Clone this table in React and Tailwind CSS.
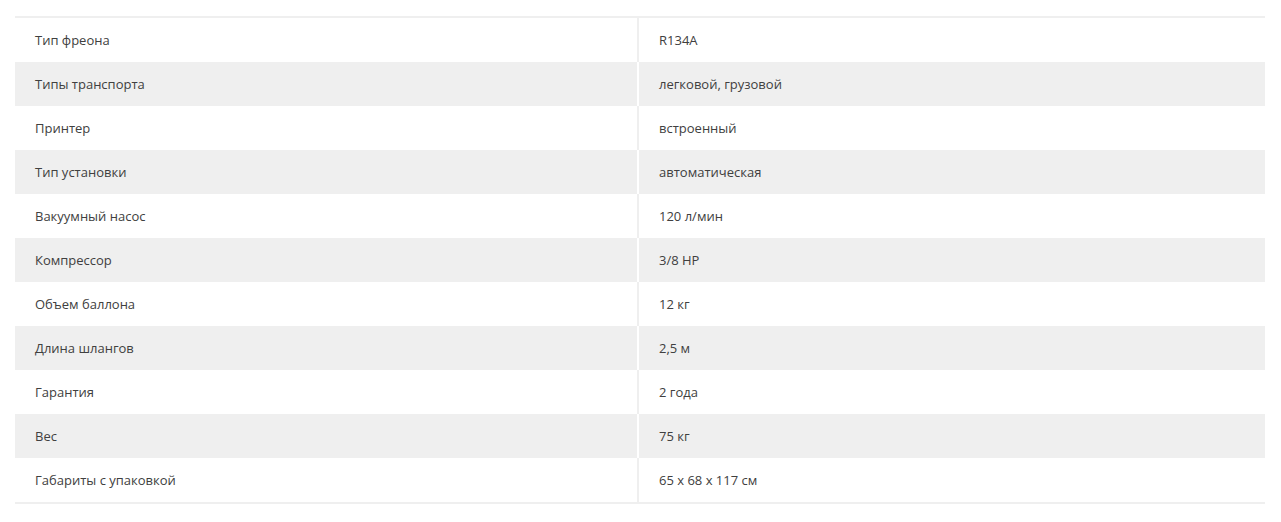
const SPECS = [
  ['Тип фреона', 'R134A'],
  ['Типы транспорта', 'легковой, грузовой'],
  ['Принтер', 'встроенный'],
  ['Тип установки', 'автоматическая'],
  ['Вакуумный насос', '120 л/мин'],
  ['Компрессор', '3/8 HP'],
  ['Объем баллона', '12 кг'],
  ['Длина шлангов', '2,5 м'],
  ['Гарантия', '2 года'],
  ['Вес', '75 кг'],
  ['Габариты с упаковкой', '65 x 68 x 117 см'],
]

export default function App() {
  return (
    <div className="min-h-screen bg-white px-[15px] pt-4 pb-4">
      <div className="w-[1250px] border-y-2 border-[#efefef] font-['Open_Sans',sans-serif] text-[13px] text-[#404040]">
        {SPECS.map(([label, value], i) => (
          <div key={label} className={i % 2 ? 'flex h-[44px] bg-[#efefef]' : 'flex h-[44px] bg-white'}>
            <div className={i % 2
              ? 'flex w-[624px] items-center border-r-2 border-white pl-5 pt-0.5'
              : 'flex w-[624px] items-center border-r-2 border-[#efefef] pl-5 pt-0.5'}>
              {label}
            </div>
            <div className="flex flex-1 items-center pl-5 pt-0.5">{value}</div>
          </div>
        ))}
      </div>
    </div>
  )
}
